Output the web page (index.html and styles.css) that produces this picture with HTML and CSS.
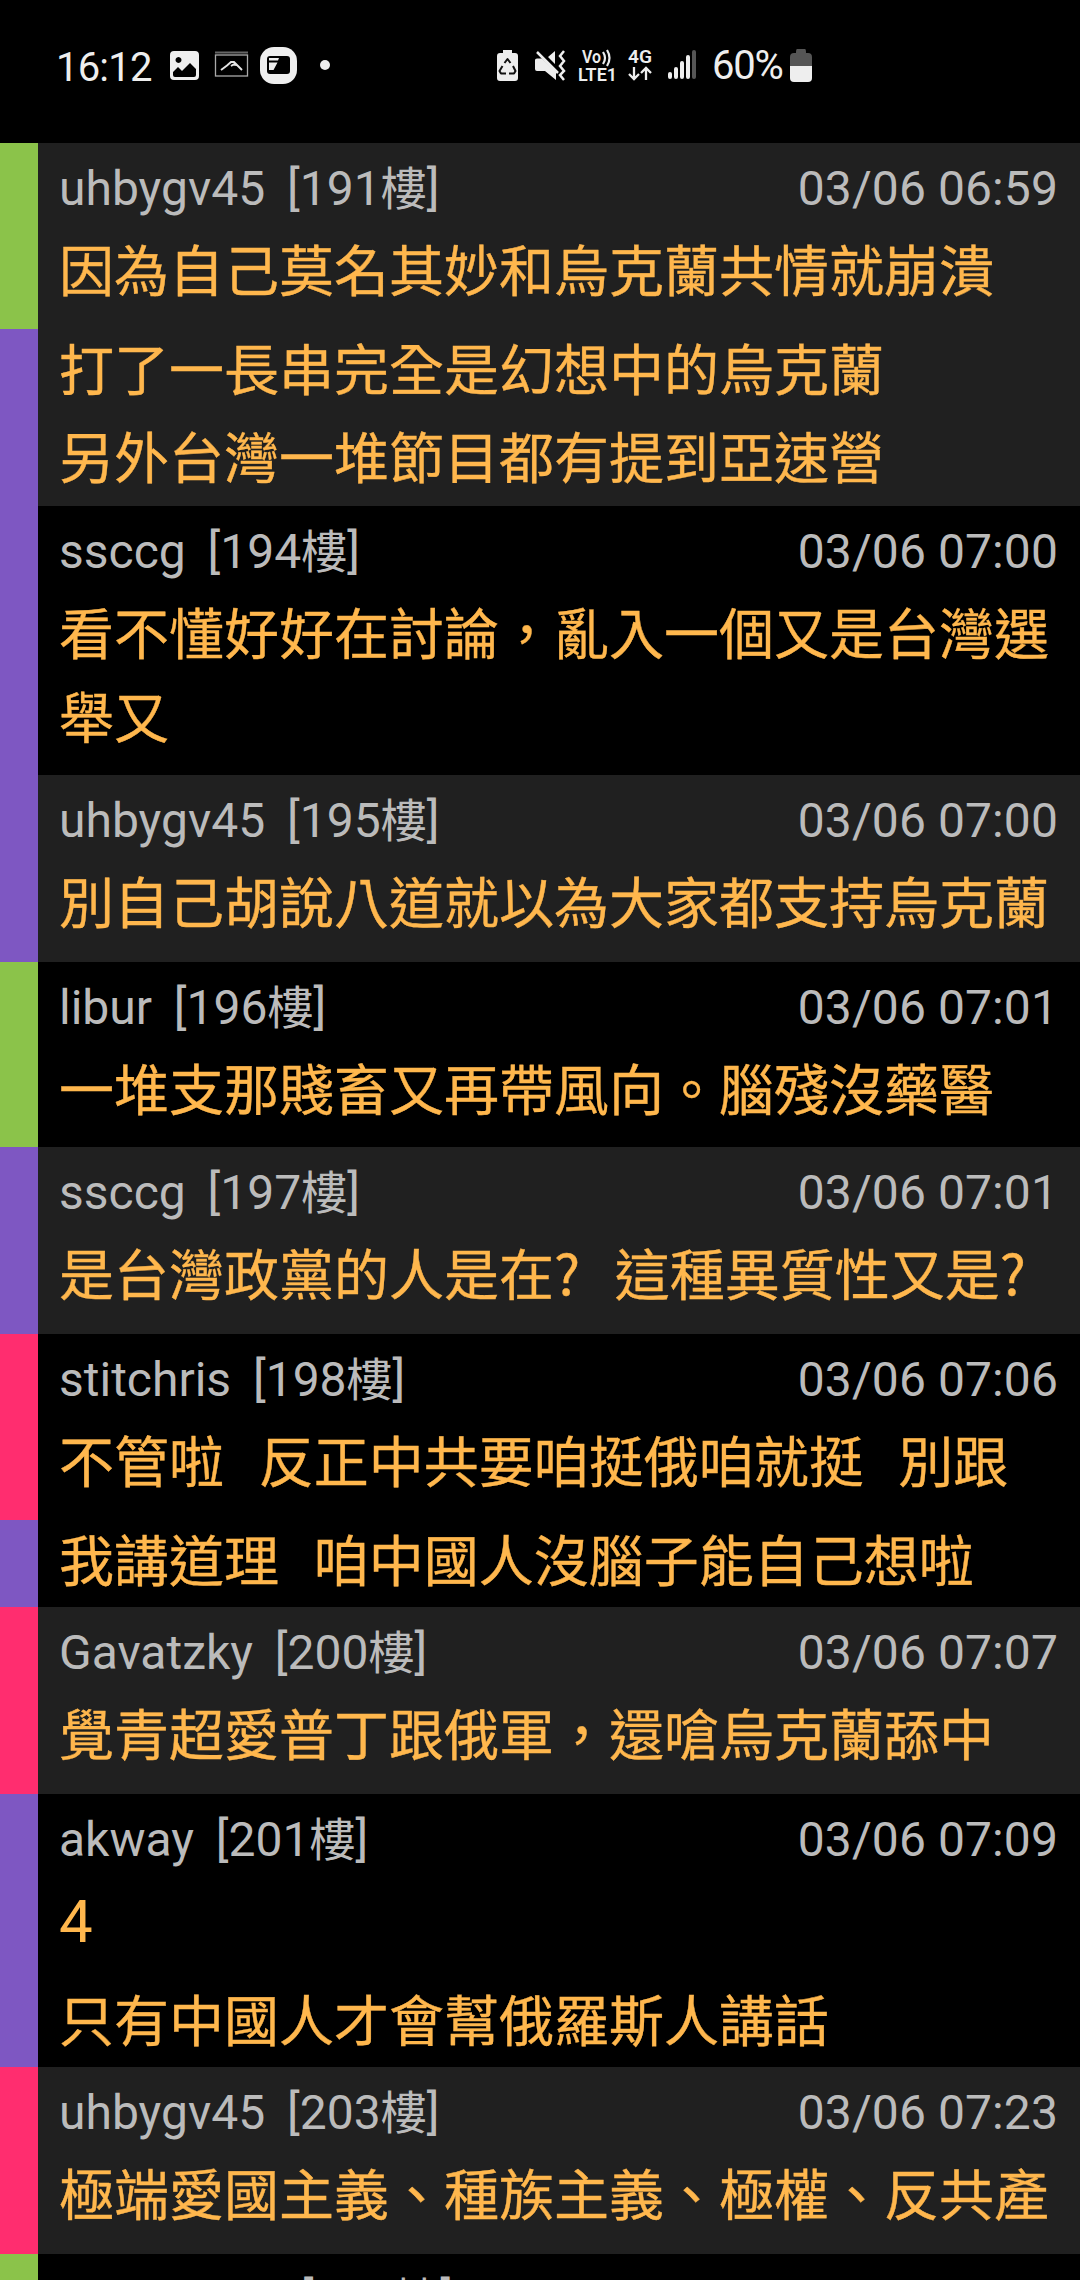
FILE: index.html
```html
<!DOCTYPE html>
<html lang="zh-Hant">
<head>
<meta charset="utf-8">
<title>推文</title>
<link rel="stylesheet" href="styles.css">
</head>
<body>
<header class="status">
  <span class="clock">16:12</span>
  <svg class="icons-left" width="200" height="80" viewBox="0 0 200 80">
    <path fill="#eee" fill-rule="evenodd" d="M15 21h21a4 4 0 0 1 4 4v21a4 4 0 0 1-4 4H15a4 4 0 0 1-4-4V25a4 4 0 0 1 4-4zM19.500 27a3 3 0 1 0 .01 0zM14 42v3a2 2 0 0 0 2 2h19a2 2 0 0 0 2-2v-6l-6-6-8 8-4-4z"/>
    <path fill="none" stroke="#666" stroke-width="2" d="M56 22.500h33"/>
    <rect x="56.500" y="25" width="32" height="21" fill="none" stroke="#aaa" stroke-width="1.300"/>
    <path fill="none" stroke="#e4e4e4" stroke-width="1.900" d="M62 40l6-4.500 4-3.500h3l8 8M72 36l2.500-1.500 3 .5"/>
    <rect x="101" y="17" width="37" height="37" rx="14" fill="#eee"/>
    <rect x="108" y="26" width="23" height="18" rx="3" fill="#000"/>
    <path d="M110 28h10l-1 2.500h-9zM110 32.500h8.500l-4 7.500H110z" fill="#eee"/>
    <circle cx="166" cy="35" r="5" fill="#eee"/>
  </svg>
  <svg class="icons-right" width="217" height="80" viewBox="0 0 217 80">
    <path fill="#eee" d="M8 20h9v3h3q3 0 3 3v22q0 3-3 3H5q-3 0-3-3V26q0-3 3-3h3z"/>
    <path fill="none" stroke="#111" stroke-width="2" stroke-linejoin="round" d="M9.500 33l3-4 3 4M18 36l2.500 5-1.500 2.500h-5M11 43.500H6L4.500 41 7.500 36"/>
    <path fill="#eee" d="M40 30q0-1.500 2-1.500h5L61 42v8l-11-9h-8q-2 0-2-2zM53 27l7-6v13z"/>
    <path fill="none" stroke="#eee" stroke-width="2.500" d="M42 22l21 21M69 21l-4 5 4 5-4 5 4 5-4 4 4 5"/>
    <text class="tag" x="87" y="33" textLength="19" lengthAdjust="spacingAndGlyphs">Vo</text>
    <path fill="none" stroke="#eee" stroke-width="2.200" d="M108 22q4 6 0 12M112 20q5 8 0 16"/>
    <text class="tag" x="83" y="51" textLength="39" lengthAdjust="spacingAndGlyphs">LTE1</text>
    <text class="tag" x="133" y="33" textLength="24" lengthAdjust="spacingAndGlyphs">4G</text>
    <path fill="none" stroke="#eee" stroke-width="2.300" d="M139 37v12M134 44l5 5 5-5M151 50V38M146 43l5-5 5 5"/>
    <path fill="none" stroke="#eee" stroke-width="4" stroke-linecap="round" d="M175 44v3M181 39v8M187 33v14M193 27v20"/>
    <path fill="none" stroke="#555" stroke-width="4" stroke-linecap="round" d="M199 22v25"/>
  </svg>
  <span class="percent">60%</span>
  <svg class="battery" width="22" height="80" viewBox="0 0 22 80">
    <path fill="#555" d="M7 19h8q1 0 1 4h2q4 0 4 4v9H0v-9q0-4 4-4h2q0-4 1-4z"/>
    <path fill="#eee" d="M0 36h22v12q0 4-4 4H4q-4 0-4-4z"/>
  </svg>
</header>
<main class="list">
  <article class="row h363">
    <div class="bar"><i class="green"></i><i class="purple rest"></i></div>
    <div class="content">
      <div class="meta"><span>uhbygv45  [191<b>樓</b>]</span><time>03/06 06:59</time></div>
      <p>因為自己莫名其妙和烏克蘭共情就崩潰</p>
      <p class="next">打了一長串完全是幻想中的烏克蘭</p>
      <p class="next">另外台灣一堆節目都有提到亞速營</p>
    </div>
  </article>
  <article class="row dark h269">
    <div class="bar"><i class="purple rest"></i></div>
    <div class="content">
      <div class="meta"><span>ssccg  [194<b>樓</b>]</span><time>03/06 07:00</time></div>
      <p>看不懂好好在討論，亂入一個又是台灣選<br>舉又</p>
    </div>
  </article>
  <article class="row h187">
    <div class="bar"><i class="purple rest"></i></div>
    <div class="content">
      <div class="meta"><span>uhbygv45  [195<b>樓</b>]</span><time>03/06 07:00</time></div>
      <p>別自己胡說八道就以為大家都支持烏克蘭</p>
    </div>
  </article>
  <article class="row dark h185">
    <div class="bar"><i class="green rest"></i></div>
    <div class="content">
      <div class="meta"><span>libur  [196<b>樓</b>]</span><time>03/06 07:01</time></div>
      <p>一堆支那賤畜又再帶風向。腦殘沒藥醫</p>
    </div>
  </article>
  <article class="row h187">
    <div class="bar"><i class="purple rest"></i></div>
    <div class="content">
      <div class="meta"><span>ssccg  [197<b>樓</b>]</span><time>03/06 07:01</time></div>
      <p>是台灣政黨的人是在?  這種異質性又是?</p>
    </div>
  </article>
  <article class="row dark h273">
    <div class="bar"><i class="pink"></i><i class="purple rest"></i></div>
    <div class="content">
      <div class="meta"><span>stitchris  [198<b>樓</b>]</span><time>03/06 07:06</time></div>
      <p>不管啦  反正中共要咱挺俄咱就挺  別跟</p>
      <p class="next">我講道理  咱中國人沒腦子能自己想啦</p>
    </div>
  </article>
  <article class="row h187">
    <div class="bar"><i class="pink rest"></i></div>
    <div class="content">
      <div class="meta"><span>Gavatzky  [200<b>樓</b>]</span><time>03/06 07:07</time></div>
      <p>覺青超愛普丁跟俄軍，還嗆烏克蘭舔中</p>
    </div>
  </article>
  <article class="row dark h273">
    <div class="bar"><i class="purple rest"></i></div>
    <div class="content">
      <div class="meta"><span>akway  [201<b>樓</b>]</span><time>03/06 07:09</time></div>
      <p><span class="latin">4</span></p>
      <p class="next">只有中國人才會幫俄羅斯人講話</p>
    </div>
  </article>
  <article class="row h187">
    <div class="bar"><i class="pink rest"></i></div>
    <div class="content">
      <div class="meta"><span>uhbygv45  [203<b>樓</b>]</span><time>03/06 07:23</time></div>
      <p>極端愛國主義、種族主義、極權、反共產</p>
    </div>
  </article>
  <article class="row dark last">
    <div class="bar"><i class="green rest"></i></div>
    <div class="content">
      <div class="meta"><span>hungyyyyy  [204<b>樓</b>]</span></div>
    </div>
  </article>
</main>
</body>
</html>
```
FILE: styles.css
```css
* { box-sizing: border-box; }
body {
  margin: 0;
  width: 1080px;
  height: 2280px;
  overflow: hidden;
  background: #000;
  font-family: Roboto, "Noto Sans CJK TC", sans-serif;
  display: flex;
  flex-direction: column;
}
.status {
  flex: none;
  height: 143px;
  padding: 30px 0 0 56px;
  display: flex;
  align-items: flex-start;
  color: #eee;
}
.clock { width: 103px; font-size: 40px; line-height: 75px; letter-spacing: -.8px; }
.icons-left { flex: none; margin-right: 136px; }
.icons-right { flex: none; }
.percent { width: 78px; font-size: 40px; line-height: 72px; letter-spacing: -1.2px; }
.battery { flex: none; }
.tag { fill: #eee; font-size: 17.5px; font-weight: 600; }

.list { flex: none; }
.row { display: flex; background: #202020; overflow: hidden; }
.dark { background: #000; }
.h185 { height: 185px; }
.h187 { height: 187px; }
.h269 { height: 269px; }
.h273 { height: 273px; }
.h363 { height: 363px; }
.last { height: 26px; }

.bar { width: 38px; display: flex; flex-direction: column; }
.bar i { flex: none; height: 186px; }
.bar .rest { flex: 1; height: auto; }
.green { background: #8bc34a; }
.purple { background: #7e57c2; }
.pink { background: #ff2d6f; }

.content { flex: 1; padding: 5px 22px 0 21px; }
.meta {
  display: flex;
  justify-content: space-between;
  height: 77px;
  line-height: 82px;
  font-size: 48px;
  color: #bbb;
  white-space: pre;
  word-spacing: -1px;
}
.meta b { font-weight: 400; font-size: 46px; line-height: 1; }
.meta time { word-spacing: 0; letter-spacing: .1px; }
p {
  margin: 0;
  height: 99px;
  font-family: "Noto Sans CJK TC", sans-serif;
  font-size: 55px;
  line-height: 84px;
  color: #ffb74d;
  -webkit-text-stroke: .4px #ffb74d;
  white-space: pre;
  word-spacing: 5px;
}
.next { height: 88px; }
.latin { font-family: Roboto, sans-serif; font-size: 60px; -webkit-text-stroke: 0; }
```
